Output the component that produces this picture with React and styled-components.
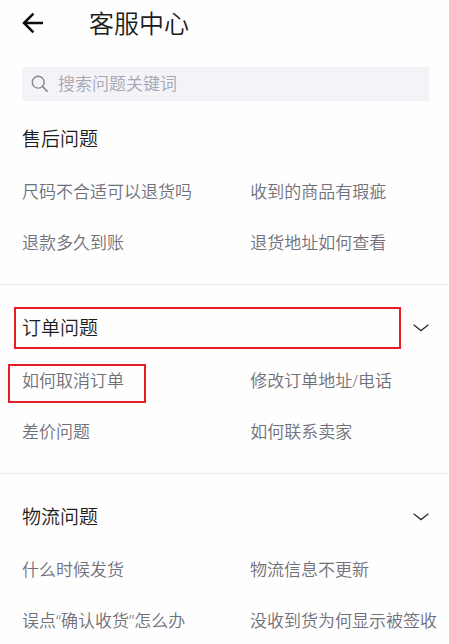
import React, { useState } from "react";
import styled, { createGlobalStyle } from "styled-components";

const sections = [
  {
    title: "售后问题",
    items: [
      { text: "尺码不合适可以退货吗" },
      { text: "收到的商品有瑕疵" },
      { text: "退款多久到账" },
      { text: "退货地址如何查看" }
    ]
  },
  {
    title: "订单问题",
    expandable: true,
    marked: true,
    items: [
      { text: "如何取消订单", marked: true },
      { text: "修改订单地址/电话" },
      { text: "差价问题" },
      { text: "如何联系卖家" }
    ]
  },
  {
    title: "物流问题",
    expandable: true,
    items: [
      { text: "什么时候发货" },
      { text: "物流信息不更新" },
      { text: "误点“确认收货”怎么办" },
      { text: "没收到货为何显示被签收" }
    ]
  }
];

function App() {
  const [keyword, setKeyword] = useState("");

  return (
    <Page>
      <GlobalStyle />
      <Header>
        <BackButton type="button" aria-label="返回">
          <svg width="22" height="22" viewBox="0 0 22 22" fill="none">
            <path
              d="M21 11 H2.2 M11.4 1.6 L2 11 L11.4 20.4"
              stroke="#0c0c0e"
              strokeWidth="2.5"
            />
          </svg>
        </BackButton>
        <Title>客服中心</Title>
      </Header>
      <SearchBar>
        <svg width="18" height="18" viewBox="0 0 18 18" fill="none">
          <circle cx="7.2" cy="7.2" r="5.9" stroke="#88888f" strokeWidth="1.4" />
          <path d="M11.4 11.4 L16.6 16.6" stroke="#88888f" strokeWidth="1.5" />
        </svg>
        <SearchInput
          type="text"
          aria-label="搜索问题关键词"
          placeholder="搜索问题关键词"
          value={keyword}
          onChange={(e) => setKeyword(e.target.value)}
        />
      </SearchBar>
      {sections.map((section) => (
        <Section key={section.title}>
          <SectionHeader>
            <SectionTitle>
              {section.title}
              {section.marked && <TitleMark />}
            </SectionTitle>
            {section.expandable && (
              <ExpandButton type="button" aria-label={"展开" + section.title}>
                <svg width="16" height="8" viewBox="0 0 16 8" fill="none">
                  <path
                    d="M0.6 0.8 L8 6.6 L15.4 0.8"
                    stroke="#303034"
                    strokeWidth="1.3"
                  />
                </svg>
              </ExpandButton>
            )}
          </SectionHeader>
          <QuestionList>
            {section.items.map((item) => (
              <Question key={item.text}>
                <QuestionLink href="#">{item.text}</QuestionLink>
                {item.marked && <QuestionMark />}
              </Question>
            ))}
          </QuestionList>
        </Section>
      ))}
    </Page>
  );
}

const GlobalStyle = createGlobalStyle`
  html {
    scrollbar-width: none;
  }

  body {
    margin: 0;
    background-color: #fefefe;
  }

  * {
    box-sizing: border-box;
  }

  body, button, input {
    font-family: "Open Sans", "Noto Sans CJK SC", sans-serif;
    font-weight: 350;
  }
`;

const Page = styled.main`
  display: flex;
  flex-direction: column;
  overflow-x: hidden;
`;

const Header = styled.header`
  display: flex;
  align-items: center;
  gap: 45px;
  height: 46px;
  padding: 0 22px;
`;

const BackButton = styled.button`
  display: flex;
  padding: 0;
  border: none;
  background: none;
  cursor: pointer;
`;

const Title = styled.h1`
  margin: 0;
  color: #1c1c20;
  font-size: 25px;
  font-weight: 350;
  line-height: 36px;
`;

const SearchBar = styled.label`
  display: flex;
  align-items: center;
  gap: 9px;
  height: 34px;
  margin: 21px 20px 0 22px;
  padding: 0 9px;
  background-color: #f3f3f8;
`;

const SearchInput = styled.input`
  flex: 1;
  min-width: 0;
  padding: 0;
  border: none;
  outline: none;
  background: none;
  color: #1c1c20;
  font-size: 17px;
  line-height: 24px;

  &::placeholder {
    color: #a6a6b3;
    opacity: 1;
  }
`;

const Section = styled.section`
  padding: 22px 0 16px;
  border-top: 1px solid #ececf0;

  &:first-of-type {
    padding-top: 17px;
    border-top: none;
  }
`;

const SectionHeader = styled.div`
  display: flex;
  align-items: center;
  gap: 12px;
  height: 42px;
  padding: 0 20px 0 22px;
`;

const SectionTitle = styled.h2`
  position: relative;
  flex: 1;
  margin: 0;
  color: #1c1c20;
  font-size: 19px;
  font-weight: 350;
  line-height: 42px;
`;

const Mark = styled.span`
  position: absolute;
  border: 2px solid #e81c24;
  pointer-events: none;
`;

const TitleMark = styled(Mark)`
  inset: 0 0 0 -8px;
`;

const QuestionMark = styled(Mark)`
  top: 9px;
  left: -14px;
  width: 138px;
  height: 39px;
`;

const ExpandButton = styled.button`
  display: flex;
  padding: 0;
  border: none;
  background: none;
  cursor: pointer;
`;

const QuestionList = styled.ul`
  display: grid;
  grid-template-columns: 11fr 9fr;
  margin: 6px 0 0;
  padding: 0 12px 0 22px;
  list-style: none;
`;

const Question = styled.li`
  position: relative;
  height: 51px;
`;

const QuestionLink = styled.a`
  color: #70707a;
  font-size: 17px;
  line-height: 51px;
  text-decoration: none;
  white-space: nowrap;
`;

export default App;
